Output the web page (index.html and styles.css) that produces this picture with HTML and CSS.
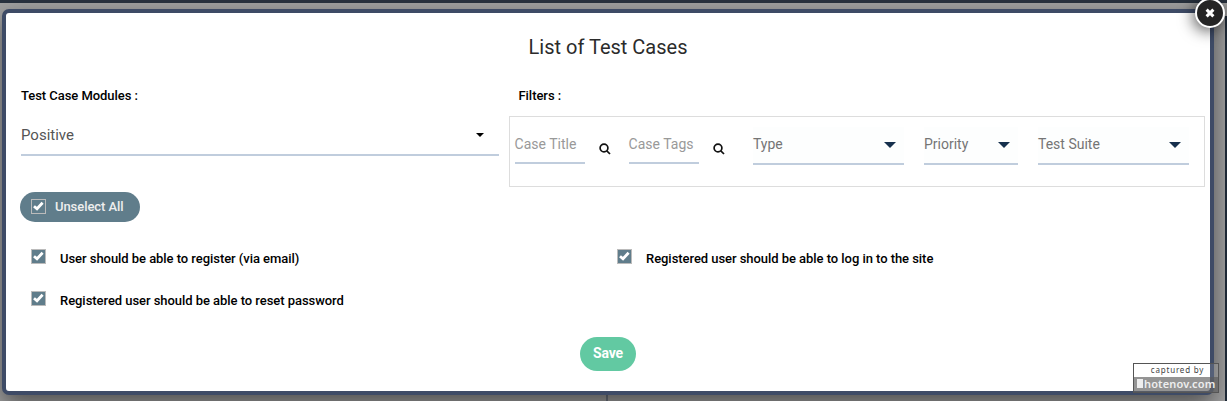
FILE: index.html
```html
<!DOCTYPE html>
<html lang="en">
<head>
<meta charset="utf-8">
<title>List of Test Cases</title>
<link rel="stylesheet" href="styles.css">
</head>
<body>
<div class="topbar"></div>
<div class="side"></div>
<div class="divider"></div>
<main class="modal">
  <h1 class="title">List of Test Cases</h1>
  <div class="columns">
    <section class="modules">
      <div class="label">Test Case Modules :</div>
      <div class="select select-main"><span>Positive</span><svg class="caret-small" viewBox="0 0 8 4"><path d="M0 0h8L4 4z"/></svg></div>
    </section>
    <section class="filters">
      <div class="label label-filters">Filters :</div>
      <div class="filter-box">
        <div class="field">Case Title</div>
        <svg class="search" viewBox="0 0 12 12"><circle cx="5" cy="5" r="3.9"/><path d="M7.8 7.8l3.2 3.2"/></svg>
        <div class="field">Case Tags</div>
        <svg class="search" viewBox="0 0 12 12"><circle cx="5" cy="5" r="3.9"/><path d="M7.8 7.8l3.2 3.2"/></svg>
        <div class="select filter-select wide"><span>Type</span><svg class="caret" viewBox="0 0 12 6"><path d="M0 0h12L6 6z"/></svg></div>
        <div class="select filter-select narrow"><span>Priority</span><svg class="caret" viewBox="0 0 12 6"><path d="M0 0h12L6 6z"/></svg></div>
        <div class="select filter-select wide"><span>Test Suite</span><svg class="caret" viewBox="0 0 12 6"><path d="M0 0h12L6 6z"/></svg></div>
      </div>
    </section>
  </div>
  <div class="unselect"><svg class="check" viewBox="0 0 15 15"><rect x=".5" y=".5" width="14" height="14"/><path d="M3 7.2l3 2.6 5.6-6"/></svg><span>Unselect All</span></div>
  <div class="cases">
    <div class="case"><svg class="check" viewBox="0 0 15 15"><rect x=".5" y=".5" width="14" height="14"/><path d="M3 7.2l3 2.6 5.6-6"/></svg><span>User should be able to register (via email)</span></div>
    <div class="case"><svg class="check" viewBox="0 0 15 15"><rect x=".5" y=".5" width="14" height="14"/><path d="M3 7.2l3 2.6 5.6-6"/></svg><span>Registered user should be able to log in to the site</span></div>
    <div class="case"><svg class="check" viewBox="0 0 15 15"><rect x=".5" y=".5" width="14" height="14"/><path d="M3 7.2l3 2.6 5.6-6"/></svg><span>Registered user should be able to reset password</span></div>
  </div>
  <button class="save">Save</button>
</main>
<div class="close"><svg viewBox="0 0 10 10"><path d="M1.6 1.6l6.8 6.8M8.4 1.6L1.6 8.4"/></svg></div>
<div class="badge"><div class="badge-top">captured by</div><div class="badge-bottom"><i class="badge-block"></i><span>hotenov.com</span></div></div>
</body>
</html>
```
FILE: styles.css
```css
* { box-sizing: border-box; }
body { margin: 0; width: 1227px; height: 401px; overflow: hidden; position: relative; background: #a1a1a1; font-family: Roboto, sans-serif; color: #000; }
svg { display: block; flex: none; }
.topbar { height: 3px; background: #29323f; }
.side { position: absolute; right: 0; top: 16px; width: 2px; height: 385px; background: #202c3a; }
.divider { position: absolute; left: 606px; top: 395px; width: 2px; height: 6px; background: #6f7580; }
.modal { position: relative; margin: 6px 0 0 2px; width: 1212px; height: 386px; border: 4px solid #3e4b66; border-radius: 7px; background: #fff; box-shadow: 0 10px 25px rgba(0,0,0,.5); padding-top: 22px; }
.title { margin: 0; font-size: 20px; line-height: 24px; font-weight: 400; text-align: center; color: #2b2b2b; }
.columns { display: grid; grid-template-columns: 478px 696px; column-gap: 10px; margin: 29px 0 0 15px; }
.label { height: 16px; line-height: 16px; font-size: 13px; font-weight: 500; letter-spacing: -.05px; }
.label-filters { padding-left: 9.5px; }
.select { display: flex; align-items: center; justify-content: space-between; border-bottom: 2px solid #c0cddd; }
.select-main { margin-top: 17px; height: 35px; padding: 0 15px 7px 0; font-size: 15px; color: #555; }
.select-main span { padding-top: 2px; }
.select-main svg { margin-top: 2px; }
.caret-small { width: 8px; height: 4px; }
.filter-box { display: flex; height: 71px; margin-top: 12px; padding: 10px 0 0 5px; border: 1px solid #ddd; }
.field { width: 70px; height: 37px; border-bottom: 2px solid #c0cddd; font-size: 14px; line-height: 35px; color: #999; white-space: nowrap; text-indent: -.4px; }
.search { width: 12px; height: 12px; margin: 16px 18px 0 14px; fill: none; stroke: #111; stroke-width: 1.7; }
.filter-select { height: 38px; padding: 0 8px 3px 0; font-size: 14px; color: #757575; background: #fdfefe; }
.filter-select .caret { margin-top: 3px; }
.wide { width: 151px; }
.search + .wide { margin-left: 10px; }
.narrow { width: 94px; margin: 0 20px; }
.caret { width: 12px; height: 6px; fill: #16304d; }
.unselect { display: flex; align-items: center; width: 120px; height: 30px; margin: 5px 0 0 14px; padding: 0 0 2px 11px; border-radius: 15px; background: #607d8b; color: #eee; font-size: 13px; font-weight: 500; letter-spacing: -.06px; }
.check { width: 15px; height: 15px; }
.check rect { fill: #607d8b; stroke: #bbb; }
.check path { fill: none; stroke: #fff; stroke-width: 2.8; }
.unselect .check { margin-right: 9px; }
.cases { display: grid; grid-template-columns: 586px 586px; grid-auto-rows: 42px; margin: 27px 0 0 25px; }
.case { display: flex; font-size: 13px; font-weight: 500; line-height: 16px; letter-spacing: -.05px; }
.case .check { margin-right: 14px; }
.case span { padding-top: 2px; }
.save { display: block; width: 56px; height: 34px; margin: 4px auto 0; padding: 0 0 2px; border: 0; border-radius: 17px; background: #62c9a2; color: #fff; font: 700 14px Roboto, sans-serif; letter-spacing: -.15px; }
.close { position: absolute; left: 1195px; top: -2px; width: 30px; height: 30px; border: 2px solid #fff; border-radius: 50%; background: #252525; box-shadow: -2px 3px 15px rgba(0,0,0,.65); display: flex; align-items: center; justify-content: center; }
.close svg { width: 10px; height: 10px; fill: none; stroke: #fff; stroke-width: 3; }
.badge { position: absolute; left: 1133px; top: 363px; width: 86px; height: 30px; border: 1px solid #555; background: rgba(255,255,255,.12); font-family: "Noto Sans", sans-serif; }
.badge-top { height: 13px; padding-left: 3px; text-align: center; font-size: 8px; line-height: 12px; letter-spacing: .8px; color: #444; }
.badge-bottom { display: flex; align-items: center; height: 15px; padding: 0 0 2px 3px; background: rgba(90,90,90,.65); color: #eee; font-size: 11px; font-weight: 600; letter-spacing: .15px; line-height: 14px; }
.badge-block { width: 6px; height: 9px; margin-right: 1px; background: #eee; }
```
